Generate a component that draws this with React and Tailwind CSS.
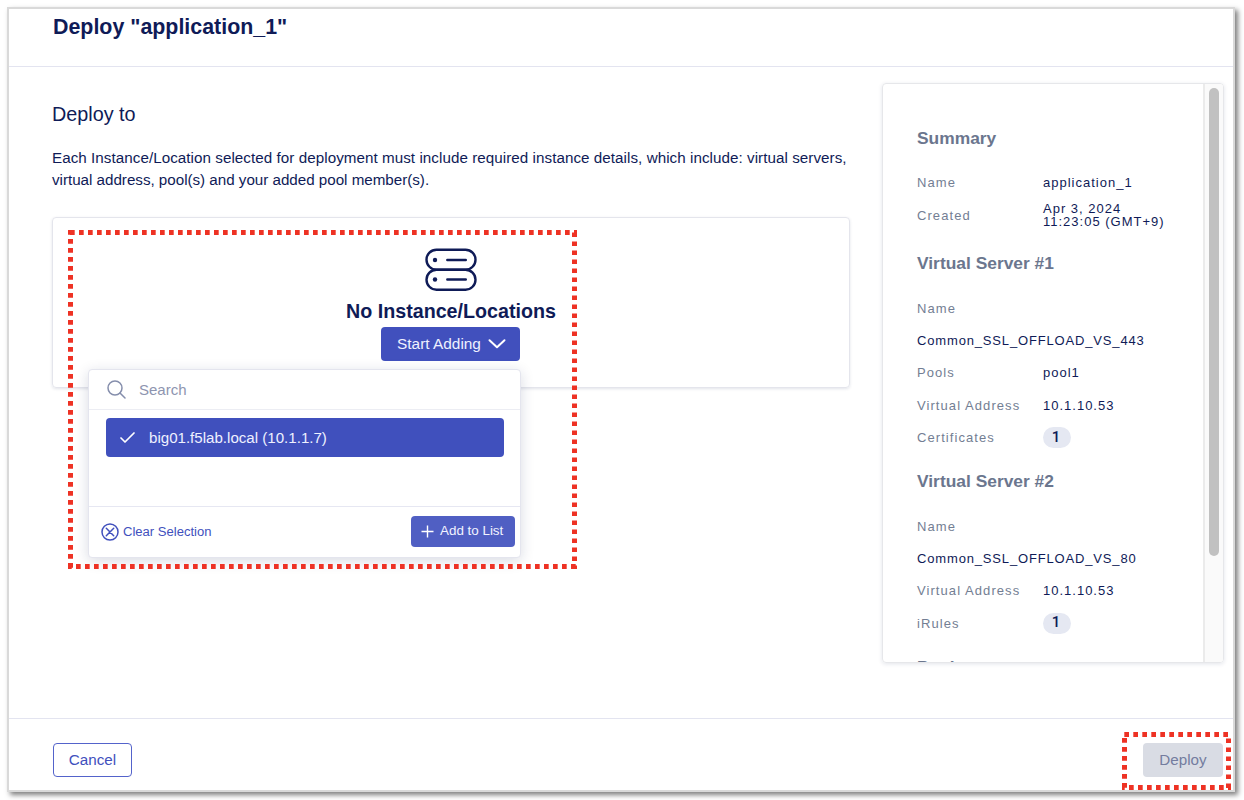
const NAVY = "text-[#0f1b57]";

function Heading({ children }) {
  return (
    <h3 className="flex h-[56.1px] items-center text-[17.4px] font-bold leading-none text-[#6b768e]">{children}</h3>
  );
}

function Row({ label, children }) {
  return (
    <div className="flex h-[32.4px] items-center text-[13px] leading-[13px] tracking-[1px]">
      <span className="w-[126px] shrink-0 tracking-[1.07px] text-[#737e93]">{label}</span>
      <span className={NAVY}>{children}</span>
    </div>
  );
}

function FullRow({ children }) {
  return (
    <div className={"flex h-[32.4px] items-center text-[13px] leading-none tracking-[0.84px] " + NAVY}>{children}</div>
  );
}

function Count({ children }) {
  return (
    <span className="flex h-[21px] w-[28px] items-center justify-center rounded-full bg-[#e5e8f2] pb-px pr-[2px] font-[Roboto,sans-serif] text-[15px] font-medium leading-none tracking-normal">
      {children}
    </span>
  );
}

function ServerIcon() {
  return (
    <svg width="52" height="44" viewBox="0 0 52 44" fill="none" stroke="#0f1b57" strokeWidth="2.4" strokeLinecap="round">
      <rect x="1.5" y="1.7" width="49" height="20" rx="10" />
      <rect x="1.5" y="21.7" width="49" height="20" rx="10" />
      <path d="M22.3 12h18.5M22.3 31.5h18.5" />
      <circle cx="10" cy="12" r="2.2" fill="#0f1b57" stroke="none" />
      <circle cx="10" cy="31.5" r="2.2" fill="#0f1b57" stroke="none" />
    </svg>
  );
}

export default function App() {
  return (
    <div className={"relative h-[800px] w-[1244px] overflow-hidden bg-white pl-[7px] pt-[7px] font-['Liberation_Sans',Arial,sans-serif] " + NAVY}>
      <div className="flex h-[785px] w-[1228px] flex-col border-2 border-[#d9d9d9] bg-white shadow-[3px_3px_5px_0px_rgba(0,0,0,0.5)]">
        <header className="h-[58px] shrink-0 border-b border-[#e3e4f0] pl-[44px] pt-[5px]">
          <h1 className="text-[21.4px] font-bold leading-[26px]">Deploy "application_1"</h1>
        </header>

        <div className="flex min-h-0 flex-1 justify-between pl-[43px] pr-[9px]">
          <main className="w-[798px] pt-[34px]">
            <h2 className="text-[19.8px] leading-[26px]">Deploy to</h2>
            <p className="mt-[20px] whitespace-nowrap text-[15.2px] leading-[22px]">
              <span className="tracking-[0.052px]">
                Each Instance/Location selected for deployment must include required instance details, which include: virtual servers,
              </span>
              <br />
              <span className="tracking-[-0.02px]">virtual address, pool(s) and your added pool member(s).</span>
            </p>
            <section className="relative mt-[26px] flex h-[171px] flex-col items-center rounded border border-[#e4e5ec] pt-[29.5px] shadow-[0_1px_3px_rgba(20,30,80,0.12)]">
              <ServerIcon />
              <h3 className="mb-px mt-[7px] text-[19.7px] font-bold leading-[24px]">No Instance/Locations</h3>
              <button className="mr-px mt-[3px] flex h-[34px] w-[139px] items-center justify-center gap-[7px] rounded bg-[#4150bd] pl-[2px] text-[15.4px] text-[#eef0ff]">
                <span className="pt-px">Start Adding</span>
                <svg width="18" height="12" viewBox="0 0 18 12" fill="none" stroke="white" strokeWidth="2" strokeLinecap="round" strokeLinejoin="round">
                  <path d="M1.5 2.2l7.5 7 7.5-7" />
                </svg>
              </button>

              <div className="absolute left-[35px] top-[151px] flex h-[189px] w-[433px] flex-col rounded border border-[#e4e5ee] bg-white shadow-[0_3px_14px_rgba(20,30,80,0.16)]">
                <div className="flex h-[40px] items-center gap-[13px] border-b border-[#ecedf3] pl-[18px] text-[15px] text-[#8e95b0]">
                  <svg width="19" height="19" viewBox="0 0 19 19" fill="none" stroke="#858eac" strokeWidth="1.5" strokeLinecap="round">
                    <circle cx="8" cy="8" r="7" />
                    <path d="M13 13l5 5" />
                  </svg>
                  <span className="pt-[2px]">Search</span>
                </div>
                <div className="flex h-[97px] flex-col border-b border-[#e6e7f2] pl-[17px] pt-[8px]">
                  <div className="flex h-[39px] w-[398px] items-center gap-[14px] rounded bg-[#4050bd] pl-[14px] text-[15.1px] text-[#eef0ff]">
                    <svg width="15" height="11" viewBox="0 0 15 11" fill="none" stroke="white" strokeWidth="1.7" strokeLinecap="round" strokeLinejoin="round">
                      <path d="M1 6l4 4 9-9" />
                    </svg>
                    <span className="pt-[2px]">big01.f5lab.local (10.1.1.7)</span>
                  </div>
                </div>
                <div className="flex flex-1 items-center justify-between pb-px pl-[12px] pr-[5px]">
                  <button className="flex items-center gap-[4px] text-[13.05px] text-[#4150bd]">
                    <svg width="18" height="18" viewBox="0 0 18 18" fill="none" stroke="#4150bd" strokeWidth="1.5" strokeLinecap="round">
                      <circle cx="9" cy="9" r="8" />
                      <path d="M5.3 5.3l7.4 7.4M12.7 5.3l-7.4 7.4" />
                    </svg>
                    Clear Selection
                  </button>
                  <button className="flex h-[31px] w-[104px] items-center gap-[6px] rounded bg-[#505fc3] pl-[10px] text-[13.4px] text-[#f2f3ff]">
                    <svg width="13" height="13" viewBox="0 0 13 13" stroke="white" strokeWidth="1.4">
                      <path d="M6.5 .5v12M.5 6.5h12" />
                    </svg>
                    Add to List
                  </button>
                </div>
              </div>
            </section>
          </main>

          <aside className="mt-[16px] flex h-[580px] w-[342px] overflow-hidden rounded border border-[#e6e7ea] shadow-[0_1px_4px_rgba(20,30,80,0.12)]">
            <div className="flex-1 overflow-hidden pl-[34px] pt-[26.5px]">
              <Heading>Summary</Heading>
              <Row label="Name">application_1</Row>
              <div className="h-[36.9px]">
                <Row label="Created">
                  Apr 3, 2024
                  <br />
                  11:23:05 (GMT+9)
                </Row>
              </div>
              <Heading>Virtual Server #1</Heading>
              <Row label="Name" />
              <FullRow>Common_SSL_OFFLOAD_VS_443</FullRow>
              <Row label="Pools">pool1</Row>
              <Row label="Virtual Address">10.1.10.53</Row>
              <Row label="Certificates"><Count>1</Count></Row>
              <Heading>Virtual Server #2</Heading>
              <Row label="Name" />
              <FullRow>Common_SSL_OFFLOAD_VS_80</FullRow>
              <Row label="Virtual Address">10.1.10.53</Row>
              <Row label="iRules"><Count>1</Count></Row>
              <Heading>Pools</Heading>
            </div>
            <div className="w-[20px] border-l-2 border-[#ebebeb] bg-[#fafafa] pl-[4px] pt-[4px]">
              <div className="h-[468px] w-[10px] rounded-full bg-[#c1c1c1]" />
            </div>
          </aside>
        </div>

        <footer className="flex h-[72px] shrink-0 items-start justify-between border-t border-[#e3e4f0] pl-[44px] pr-[10px] pt-[24px]">
          <button className="h-[34px] w-[79px] rounded border border-[#5463cb] text-[15.2px] text-[#4150bd]">Cancel</button>
          <button className="h-[34px] w-[80px] rounded bg-[#d9dce4] text-[15.2px] text-[#747c9f]">Deploy</button>
        </footer>
      </div>

      <svg className="pointer-events-none absolute inset-0" width="1244" height="800" fill="none" stroke="#ee3224" strokeWidth="5" strokeDasharray="4.7 4.3">
        <path d="M70.5 230V569M574.5 232.4V569M70 232.5H577" />
        <path d="M68 566.5H577" strokeDashoffset="1" />
        <path d="M1124.5 738V790M1228.5 738.4V790M1124.3 734.5H1231" />
        <path d="M1122 787.5H1231" strokeDashoffset="2" />
      </svg>
    </div>
  );
}
